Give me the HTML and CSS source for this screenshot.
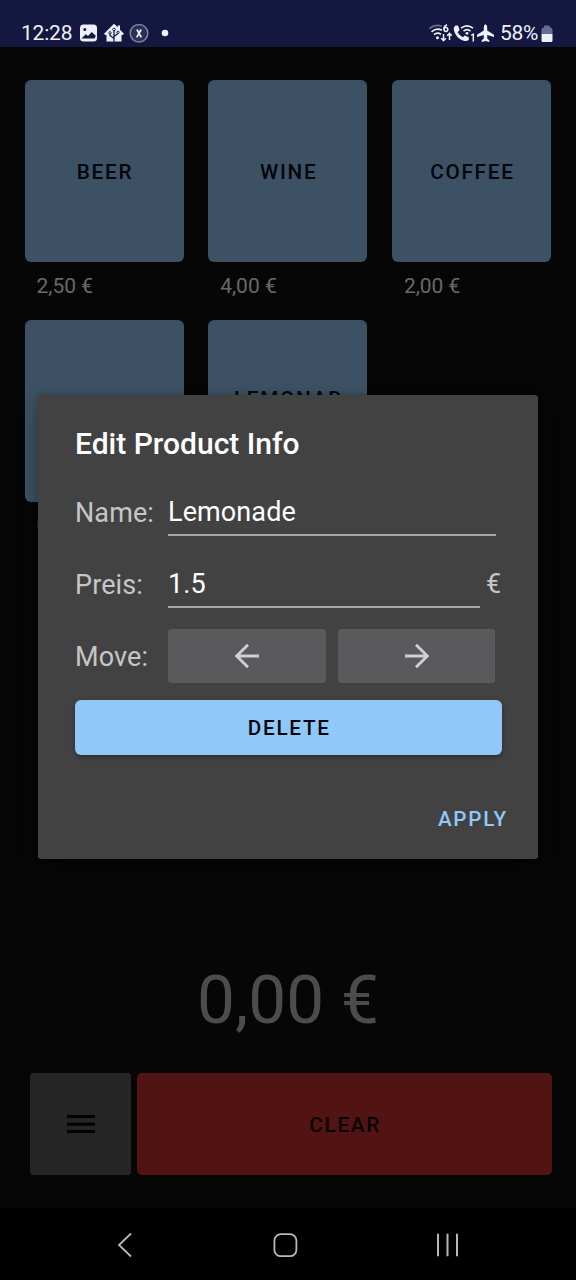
FILE: index.html
```html
<!DOCTYPE html>
<html lang="en">
<head>
<meta charset="utf-8">
<title>Edit Product Info</title>
<link rel="stylesheet" href="styles.css">
</head>
<body>
<div class="screen">
  <header class="status">
    <span class="clock">12:28</span>
    <svg class="status-left" width="96" height="24" viewBox="0 0 96 24">
      <rect x="4" y="3.5" width="17" height="17" rx="3.5" fill="#eef0fb"/>
      <circle cx="8.8" cy="8.5" r="1.5" fill="#14173f"/>
      <path d="M5.500 17.500l4.200-4.200 2.300 1.700 3.800-4 4 3.800-1.200 2.700z" fill="#14173f"/>
      <path d="M38 2.800l3.700 3.500V4.500h2.300v4.200l4 4-1.200 1.300H45.500v6.500H30.500V14h-1.300L28 12.700z" fill="#eef0fb"/>
      <path d="M38 20.500V8.500M38 17.500l-4-3v-3M38 15.500l4-3v-2" fill="none" stroke="#14173f" stroke-width="1.300"/>
      <g fill="#eef0fb" stroke="#14173f" stroke-width=".9"><circle cx="38" cy="8.500" r="1.300"/><circle cx="34" cy="11.800" r="1.200"/><circle cx="42" cy="11.300" r="1.200"/></g>
      <circle cx="63" cy="12.300" r="8.800" fill="#2c2e55" stroke="#8083a3" stroke-width="1.500"/>
      <path d="M60.900 8.500l4.400 7.800M65.200 8.500l-4.500 7.800" stroke="#eef0fb" stroke-width="1.700"/>
      <circle cx="89" cy="12" r="3.300" fill="#eef0fb"/>
    </svg>
    <svg class="status-right" width="68" height="24" viewBox="0 0 68 24">
      <g fill="none" stroke="#eef0fb" stroke-width="1.700">
        <path d="M1.500 7.500Q7 2.900 14 5.300" stroke="#696c92"/>
        <path d="M3.500 10.800Q8.500 6.500 14 9.300M6 13.700Q9 11 13 13.200"/>
        <path d="M19 3.700Q15.900 5 15.900 8.200"/><circle cx="17.900" cy="8.500" r="1.900" stroke-width="1.500"/>
        <path d="M15.500 13v6.500M13.200 17.300l2.300 2.400 2.300-2.400M21.500 19v-6.500M19.200 14.800l2.300-2.400 2.300 2.400" stroke-width="1.500"/>
        <path d="M33 7.200Q39 2.500 45 7.200M35.500 10.200Q39 7 42.500 10.200" stroke-width="1.700"/>
        <path d="M43.200 14.400l2.100-1.200V20.500" stroke-width="1.500"/>
      </g>
      <circle cx="9.500" cy="16.700" r="1.500" fill="#eef0fb"/>
      <circle cx="39" cy="12.300" r="1.400" fill="#eef0fb"/>
      <path d="M27.500 4.500l2.500 0 1.600 4.500-2 2.200q1.800 3.200 5.200 5l2-1.800 4 1.800v2.500q-1.700 1.800-4.300 1.300C30.500 18.300 26.500 13.500 25.700 8q0-2.500 1.800-3.500z" fill="#eef0fb"/>
      <path d="M57.500 3.200q1.700.5 1.700 3v3.300l6.800 4.200v2.200l-6.800-2v3.600l2.100 1.800v1.700l-3.800-1-3.800 1v-1.700l2.100-1.800v-3.600l-6.800 2v-2.200l6.800-4.200V6.200q0-2.500 1.700-3z" fill="#eef0fb"/>
    </svg>
    <span class="battery-text">58%</span>
    <svg class="battery" width="12" height="18" viewBox="0 0 12 18">
      <path d="M3 2.500V1.500Q3 .5 4 .5h4q1 0 1 1v1q2.500 0 2.500 2V9H.5V4.500q0-2 2.500-2z" fill="#696c92"/>
      <path d="M.5 9h11v6.500q0 1.500-1.500 1.500H2Q.5 17 .5 15.500z" fill="#eef0fb"/>
    </svg>
  </header>

  <main class="shop">
    <div class="products">
      <div class="product"><button class="tile">BEER</button><span class="price">2,50 €</span></div>
      <div class="product"><button class="tile">WINE</button><span class="price">4,00 €</span></div>
      <div class="product"><button class="tile">COFFEE</button><span class="price">2,00 €</span></div>
      <div class="product"><button class="tile"></button><span class="price">0</span></div>
      <div class="product"><button class="tile two-line">LEMONAD</button></div>
    </div>
    <div class="total">0,00 €</div>
    <div class="actions">
      <button class="menu" aria-label="Menu">
        <svg width="28" height="20" viewBox="0 0 28 20"><path d="M0 2.500h28M0 10.200h28M0 17.500h28" stroke="#000" stroke-width="2.900"/></svg>
      </button>
      <button class="clear">CLEAR</button>
    </div>
  </main>

  <nav class="navbar">
    <svg width="16" height="26" viewBox="0 0 16 26"><path d="M14 1.500L2 13l12 11.500" fill="none" stroke="#b8b8b8" stroke-width="1.800"/></svg>
    <svg width="26" height="26" viewBox="0 0 26 26"><rect x="2.400" y="2.200" width="22" height="22" rx="6.500" fill="none" stroke="#b8b8b8" stroke-width="1.800"/></svg>
    <svg width="24" height="26" viewBox="0 0 24 26"><path d="M2 1.700v22.600M11.500 1.700v22.600M21 1.700v22.600" stroke="#b8b8b8" stroke-width="2"/></svg>
  </nav>

  <section class="dialog">
    <h1 class="title">Edit Product Info</h1>
    <div class="row">
      <label class="label">Name:</label>
      <div class="field name-field">Lemonade</div>
    </div>
    <div class="row">
      <label class="label">Preis:</label>
      <div class="field price-field">1.5</div>
      <span class="unit">€</span>
    </div>
    <div class="row">
      <span class="label">Move:</span>
      <div class="moves">
        <button class="move" aria-label="Move left"><svg width="26" height="26" viewBox="0 0 26 26"><path d="M25 13H3M14 1.800L2.700 13 14 24.200" fill="none" stroke="#d0d0d1" stroke-width="2.900"/></svg></button>
        <button class="move" aria-label="Move right"><svg width="26" height="26" viewBox="0 0 26 26"><path d="M1 13h22M12 1.800L23.300 13 12 24.200" fill="none" stroke="#d0d0d1" stroke-width="2.900"/></svg></button>
      </div>
    </div>
    <button class="delete">DELETE</button>
    <button class="apply">APPLY</button>
  </section>
</div>
</body>
</html>
```

FILE: styles.css
```css
* { box-sizing: border-box; }
body { margin: 0; background: #060606; font-family: Roboto, "Noto Sans", sans-serif; }
button { margin: 0; padding: 2px 0 0 2px; border: 0; font: 500 20.700px/28px Roboto, "Noto Sans", sans-serif; letter-spacing: 1.750px; display: flex; align-items: center; justify-content: center; }
svg { display: block; flex: none; }

.screen { position: relative; width: 576px; height: 1280px; display: flex; flex-direction: column; overflow: hidden; }

.status { height: 47px; padding: 19px 0 0 21px; background: #14173f; display: flex; align-items: flex-start; color: #eef0fb; font-size: 21px; line-height: 28px; }
.clock { width: 55px; letter-spacing: -.2px; }
.status-left { margin-top: 2px; }
.status-right { margin: 2px 0 0 255.500px; }
.battery-text { width: 41px; margin-left: 4.500px; letter-spacing: -.3px; }
.battery { margin-top: 5.500px; }

.shop { flex: 1; padding: 33px 24.500px 0; display: flex; flex-direction: column; }
.products { display: grid; grid-template-columns: repeat(3, 159px); column-gap: 24.700px; row-gap: 19.500px; height: 862px; align-content: start; }
.product { display: flex; flex-direction: column; height: 220px; }
.tile { width: 159px; height: 182px; border-radius: 6px; background: #3c5163; color: #02050c; }
.two-line { padding-bottom: 26px; }
.price { padding: 10px 0 0 12px; font-size: 21px; line-height: 28px; color: #686868; }
.total { height: 131px; text-align: center; font-size: 67.500px; line-height: 115px; color: #4c4c4c; }
.actions { display: flex; gap: 6px; padding-left: 5.500px; }
.menu { width: 101px; height: 102px; padding: 0 0 0 1px; border-radius: 3px; background: #252525; }
.clear { width: 415.500px; height: 102px; border-radius: 5px; background: #521313; color: #080202; }

.navbar { height: 72px; background: #000; padding: 2px 116px 0 117px; display: flex; justify-content: space-between; align-items: center; }

.dialog { position: absolute; left: 38px; top: 395px; width: 500px; height: 464px; padding: 29px 30px 0 37px; border-radius: 3px; background: #424242; box-shadow: 0 8px 20px rgba(0, 0, 0, .3), 0 0 6px rgba(0, 0, 0, .15); display: flex; flex-direction: column; }
.title { margin: 0 0 12px; font-size: 30px; font-weight: 500; line-height: 40px; color: #fff; }
.row { height: 72px; display: flex; align-items: center; font-size: 27px; color: #c6c6c6; }
.label { width: 93px; flex: none; padding-top: 1px; letter-spacing: .1px; }
.field { height: 47px; line-height: 47px; color: #fff; border-bottom: 2px solid #a8a8a8; letter-spacing: .1px; }
.name-field { width: 327.500px; }
.price-field { width: 312px; }
.unit { margin-left: 6px; }
.moves { display: flex; gap: 12px; margin-top: -1px; }
.move { width: 157.700px; height: 54px; padding: 0; border-radius: 3px; background: #5a5a5c; }
.delete { width: 426.500px; height: 54.500px; margin-top: 8px; border-radius: 6px; background: #90c9f8; color: #02050c; box-shadow: 0 2px 4px rgba(0, 0, 0, .35); }
.apply { align-self: flex-end; margin-top: 48px; background: none; color: #90c9f8; height: 30px; }
```
